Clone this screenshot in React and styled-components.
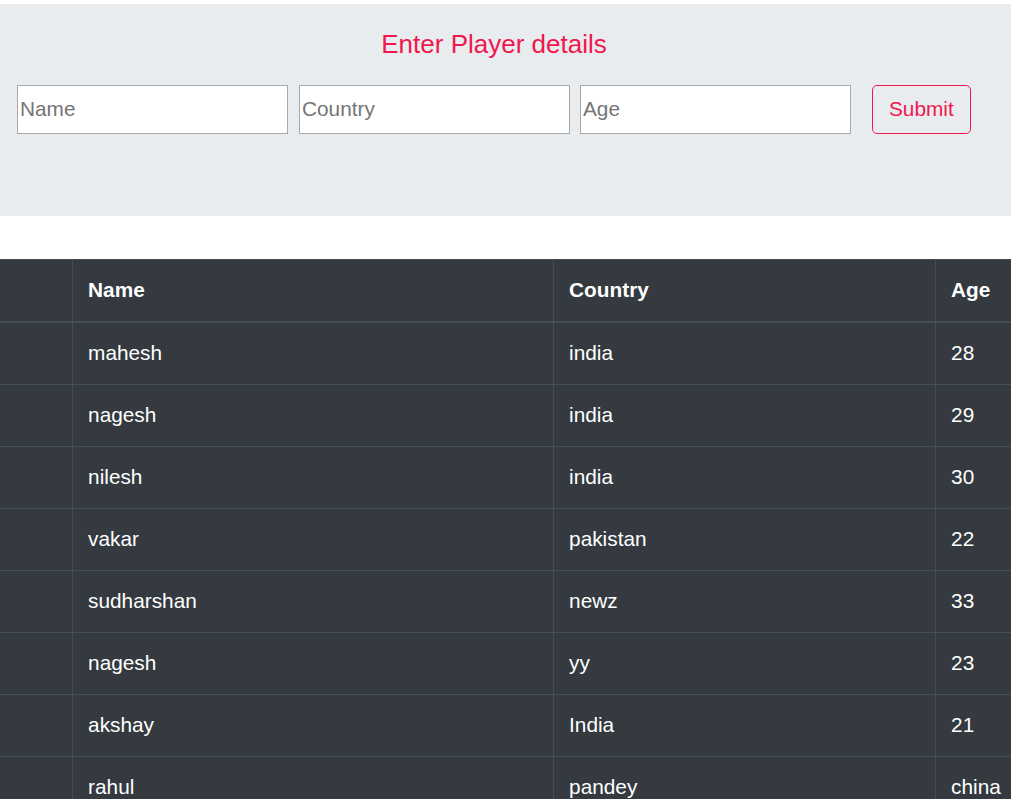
import React from "react";
import styled, { createGlobalStyle } from "styled-components";

const GlobalStyle = createGlobalStyle`
  html, body {
    margin: 0;
    padding: 0;
    overflow: hidden;
    background: #fff;
  }
  body {
    font-family: "Liberation Sans", Arial, sans-serif;
    font-size: 20.8px;
    line-height: 1.5;
    color: #212529;
  }
`;

const FormPanel = styled.div`
  margin-top: 4px;
  background: #e9ecef;
  padding: 25px 0 82px;
`;

const Title = styled.h2`
  margin: 0 23px 25px 0;
  text-align: center;
  font-size: 26px;
  font-weight: 400;
  line-height: 1.2;
  color: #f0174d;
`;

const FormRow = styled.form`
  display: flex;
  align-items: center;
  padding-left: 17px;
`;

const Field = styled.input`
  box-sizing: border-box;
  width: 271px;
  height: 49px;
  margin-right: ${(p) => p.$gap}px;
  padding: 0 2px 2px;
  border: 1px solid #a9a9a9;
  border-radius: 0;
  background: #fff;
  font-family: inherit;
  font-size: 20.8px;
  color: #495057;
  outline: none;
  &::placeholder {
    color: #757575;
  }
`;

const SubmitButton = styled.button`
  box-sizing: border-box;
  height: 49px;
  margin-left: 21px;
  padding: 0 16px 2px;
  border: 1px solid #f0174d;
  border-radius: 5px;
  background: transparent;
  color: #f0174d;
  font-family: inherit;
  font-size: 20.8px;
  cursor: pointer;
`;

const TableWrap = styled.div`
  margin-top: 43px;
  width: 1040px;
`;

const Table = styled.table`
  width: 100%;
  border-collapse: collapse;
  background: #343a40;
  color: #fff;
  table-layout: fixed;
`;

const Col = styled.col`
  width: ${(p) => p.$w}px;
`;

const HeadCell = styled.th`
  padding: 14.5px 15.6px 16.5px;
  line-height: 30px;
  text-align: left;
  font-weight: 700;
  border: 1px solid #454d55;
  border-bottom-width: 2px;
  border-left: ${(p) => (p.$first ? "none" : "1px solid #454d55")};
`;

const Cell = styled.td`
  padding: 14.5px 15.6px 16.5px;
  line-height: 30px;
  text-align: left;
  border: 1px solid #454d55;
  border-left: ${(p) => (p.$first ? "none" : "1px solid #454d55")};
  white-space: nowrap;
`;

const players = [
  ["mahesh", "india", "28"],
  ["nagesh", "india", "29"],
  ["nilesh", "india", "30"],
  ["vakar", "pakistan", "22"],
  ["sudharshan", "newz", "33"],
  ["nagesh", "yy", "23"],
  ["akshay", "India", "21"],
  ["rahul", "pandey", "china"],
];

const App = () => {
  return (
    <>
      <GlobalStyle />
      <FormPanel>
        <Title>Enter Player details</Title>
        <FormRow onSubmit={(e) => e.preventDefault()}>
          <Field placeholder="Name" $gap={11} />
          <Field placeholder="Country" $gap={10} />
          <Field placeholder="Age" $gap={0} />
          <SubmitButton type="submit">Submit</SubmitButton>
        </FormRow>
      </FormPanel>

      <TableWrap>
        <Table>
          <colgroup>
            <Col $w={72} />
            <Col $w={481} />
            <Col $w={382} />
            <Col $w={105} />
          </colgroup>
          <thead>
            <tr>
              <HeadCell $first></HeadCell>
              <HeadCell>Name</HeadCell>
              <HeadCell>Country</HeadCell>
              <HeadCell>Age</HeadCell>
            </tr>
          </thead>
          <tbody>
            {players.map((p, i) => (
              <tr key={i}>
                <Cell $first></Cell>
                <Cell>{p[0]}</Cell>
                <Cell>{p[1]}</Cell>
                <Cell>{p[2]}</Cell>
              </tr>
            ))}
          </tbody>
        </Table>
      </TableWrap>
    </>
  );
};

export default App;
